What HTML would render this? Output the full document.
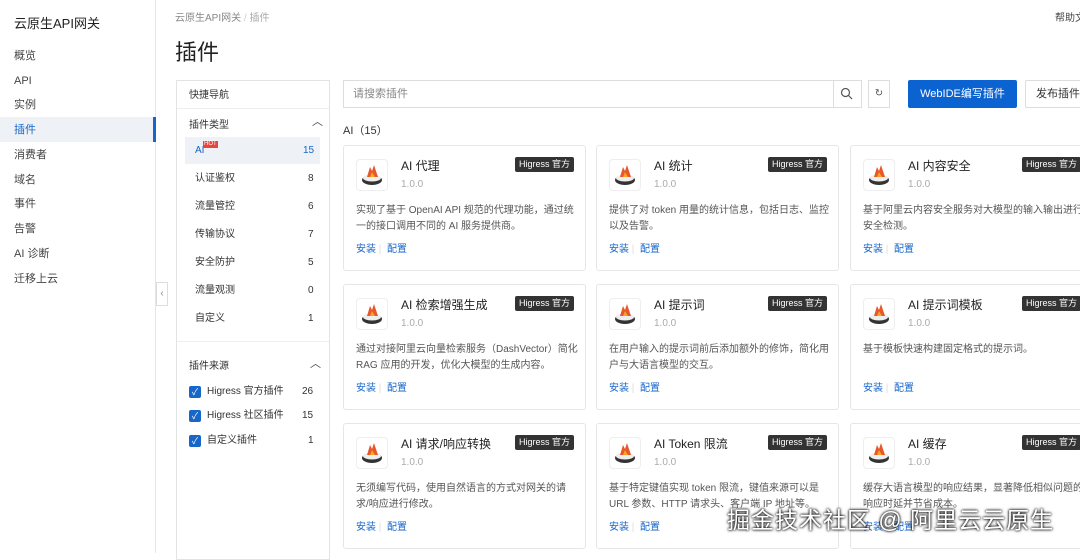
<html><head><style>
*{box-sizing:border-box;margin:0;padding:0}
body{width:1080px;height:553px;overflow:hidden;background:#fff;font-family:"Liberation Sans","Noto Sans CJK SC",sans-serif;color:#333;position:relative;font-size:12px;line-height:14px}
.abs{position:absolute;white-space:nowrap}
.side{left:0;top:0;width:156px;height:553px;border-right:1px solid #e5e5e5}
.side .t{position:absolute;left:14px;top:17px;font-size:13px;color:#222}
.side .i{position:absolute;left:14px;font-size:11px;color:#444}
.card{position:absolute;width:243px;height:126px;border:1px solid #e6e6e6;border-radius:3px;background:#fff}
.card .ic{position:absolute;left:12px;top:13px;width:32px;height:32px;border:1px solid #eee;border-radius:4px}
.card .n{position:absolute;left:57px;top:13px;font-size:12px;color:#222}
.card .v{position:absolute;left:57px;top:32px;font-size:10px;color:#aaa}
.card .tag{position:absolute;right:11px;top:11px;background:#333;color:#fff;font-size:9px;line-height:13px;padding:1px 4px;border-radius:2px}
.card .d{position:absolute;left:12px;top:57px;width:222px;font-size:10px;line-height:16px;color:#555}
.card .a{position:absolute;left:12px;top:97px;font-size:10px;color:#1766c9}
.f{position:absolute;left:195px;font-size:10px;color:#333;line-height:12px}
.n2{position:absolute;font-size:10px;line-height:12px}
.cb{position:absolute;left:189px;width:12px;height:12px;background:#1766c9;border-radius:2px;color:#fff;font-size:9px;line-height:12px;text-align:center}
</style></head><body>
<div class="abs side">
<div class="t">云原生API网关</div>
<div class="i" style="top:49px">概览</div>
<div class="i" style="top:74px">API</div>
<div class="i" style="top:98px">实例</div>
<div class="abs" style="left:0;top:117px;width:156px;height:25px;background:#eef2f6;border-right:3px solid #1766c9"></div>
<div class="i" style="top:123px;color:#1766c9">插件</div>
<div class="i" style="top:148px">消费者</div>
<div class="i" style="top:173px">域名</div>
<div class="i" style="top:197px">事件</div>
<div class="i" style="top:222px">告警</div>
<div class="i" style="top:247px">AI 诊断</div>
<div class="i" style="top:272px">迁移上云</div>
</div>
<div class="abs" style="left:156px;top:282px;width:12px;height:24px;border:1px solid #ddd;background:#fff;font-size:10px;color:#888;text-align:center;line-height:22px">‹</div>
<div class="abs" style="left:175px;top:12px;font-size:10px;color:#888">云原生API网关 <span style="color:#ccc">/</span> <span style="color:#aaa">插件</span></div>
<div class="abs" style="left:1055px;top:12px;font-size:10px;color:#444">帮助文档</div>
<div class="abs" style="left:175px;top:39px;font-size:22px;line-height:28px;color:#222">插件</div>
<div class="abs" style="left:176px;top:80px;width:154px;height:480px;border:1px solid #e3e3e3"></div>
<div class="abs" style="left:189px;top:89px;font-size:10px">快捷导航</div>
<div class="abs" style="left:177px;top:108px;width:152px;border-top:1px solid #eee"></div>
<div class="abs" style="left:189px;top:119px;font-size:10px">插件类型</div>
<div class="abs" style="left:312px;top:115px;font-size:11px;color:#444">︿</div>
<div class="abs" style="left:185px;top:137px;width:135px;height:27px;background:#eef1f5"></div>
<div class="abs" style="left:195px;top:145px;font-size:10px;line-height:12px;color:#1766c9">AI</div>
<div class="abs" style="left:203px;top:141px;font-size:6px;line-height:7px;color:#fff;background:#e8453c;padding:0 1px">HOT</div>
<div class="n2" style="left:303px;top:145px;color:#1766c9">15</div>
<div class="f" style="top:173px">认证鉴权</div><div class="n2" style="left:308px;top:173px">8</div>
<div class="f" style="top:201px">流量管控</div><div class="n2" style="left:308px;top:201px">6</div>
<div class="f" style="top:229px">传输协议</div><div class="n2" style="left:308px;top:229px">7</div>
<div class="f" style="top:257px">安全防护</div><div class="n2" style="left:308px;top:257px">5</div>
<div class="f" style="top:285px">流量观测</div><div class="n2" style="left:308px;top:285px">0</div>
<div class="f" style="top:313px">自定义</div><div class="n2" style="left:308px;top:313px">1</div>
<div class="abs" style="left:177px;top:341px;width:152px;border-top:1px solid #eee"></div>
<div class="abs" style="left:189px;top:360px;font-size:10px">插件来源</div>
<div class="abs" style="left:310px;top:357px;font-size:11px;color:#444">︿</div>
<div class="cb" style="top:386px">✓</div><div class="n2" style="left:207px;top:386px">Higress 官方插件</div><div class="n2" style="left:302px;top:386px">26</div>
<div class="cb" style="top:410px">✓</div><div class="n2" style="left:207px;top:410px">Higress 社区插件</div><div class="n2" style="left:302px;top:410px">15</div>
<div class="cb" style="top:435px">✓</div><div class="n2" style="left:207px;top:435px">自定义插件</div><div class="n2" style="left:308px;top:435px">1</div>

<div class="abs" style="left:343px;top:80px;width:519px;height:28px;border:1px solid #ddd"></div>
<div class="abs" style="left:833px;top:80px;width:1px;height:28px;background:#ddd"></div>
<div class="abs" style="left:353px;top:87px;font-size:11px;color:#888">请搜索插件</div>
<svg class="abs" style="left:840px;top:87px" width="13" height="13"><circle cx="5.5" cy="5.5" r="4" fill="none" stroke="#555" stroke-width="1.2"/><path d="M8.5 8.5L12 12" stroke="#555" stroke-width="1.2"/></svg>
<div class="abs" style="left:868px;top:80px;width:22px;height:28px;border:1px solid #ddd;text-align:center;line-height:26px;font-size:10px;color:#555">↻</div>
<div class="abs" style="left:908px;top:80px;width:109px;height:28px;background:#0b63d1;border-radius:2px;color:#fff;font-size:11px;text-align:center;line-height:28px">WebIDE编写插件</div>
<div class="abs" style="left:1025px;top:80px;width:70px;height:28px;border:1px solid #ddd;border-radius:2px;font-size:11px;line-height:26px;padding-left:10px">发布插件</div>
<div class="abs" style="left:343px;top:124px;font-size:11px">AI（15）</div>

<div id="cards"></div>
<script>
var d=[["AI 代理","实现了基于 OpenAI API 规范的代理功能，通过统一的接口调用不同的 AI 服务提供商。"],["AI 统计","提供了对 token 用量的统计信息，包括日志、监控以及告警。"],["AI 内容安全","基于阿里云内容安全服务对大模型的输入输出进行安全检测。"],["AI 检索增强生成","通过对接阿里云向量检索服务（DashVector）简化 RAG 应用的开发，优化大模型的生成内容。"],["AI 提示词","在用户输入的提示词前后添加额外的修饰，简化用户与大语言模型的交互。"],["AI 提示词模板","基于模板快速构建固定格式的提示词。"],["AI 请求/响应转换","无须编写代码，使用自然语言的方式对网关的请求/响应进行修改。"],["AI Token 限流","基于特定键值实现 token 限流，键值来源可以是 URL 参数、HTTP 请求头、客户端 IP 地址等。"],["AI 缓存","缓存大语言模型的响应结果，显著降低相似问题的响应时延并节省成本。"]];
var ic='<svg width="30" height="30" viewBox="0 0 30 30"><ellipse cx="15" cy="20" rx="10" ry="5" fill="#333"/><ellipse cx="15" cy="18" rx="9" ry="3.5" fill="#eee"/><path d="M10 17 L13 7 L15 11 L17 5 L21 17 Z" fill="#e8572a"/><path d="M13 17 L15 12 L18 17Z" fill="#f5a623"/></svg>';
var h='',xs=[343,596,850],ys=[145,284,423];
d.forEach(function(c,i){h+='<div class="card" style="left:'+xs[i%3]+'px;top:'+ys[Math.floor(i/3)]+'px"><div class="ic">'+ic+'</div><div class="n">'+c[0]+'</div><div class="v">1.0.0</div><div class="tag">Higress 官方</div><div class="d">'+c[1]+'</div><div class="a">安装 <span style="color:#ddd">|</span> &nbsp;配置</div></div>'});
document.getElementById('cards').innerHTML=h;
</script>
<div class="abs" style="left:727px;top:506px;font-size:23px;line-height:28px;letter-spacing:1px;color:#fff;text-shadow:0 0 3px #000,0 0 2px #000">掘金技术社区 @ 阿里云云原生</div>
</body></html>
